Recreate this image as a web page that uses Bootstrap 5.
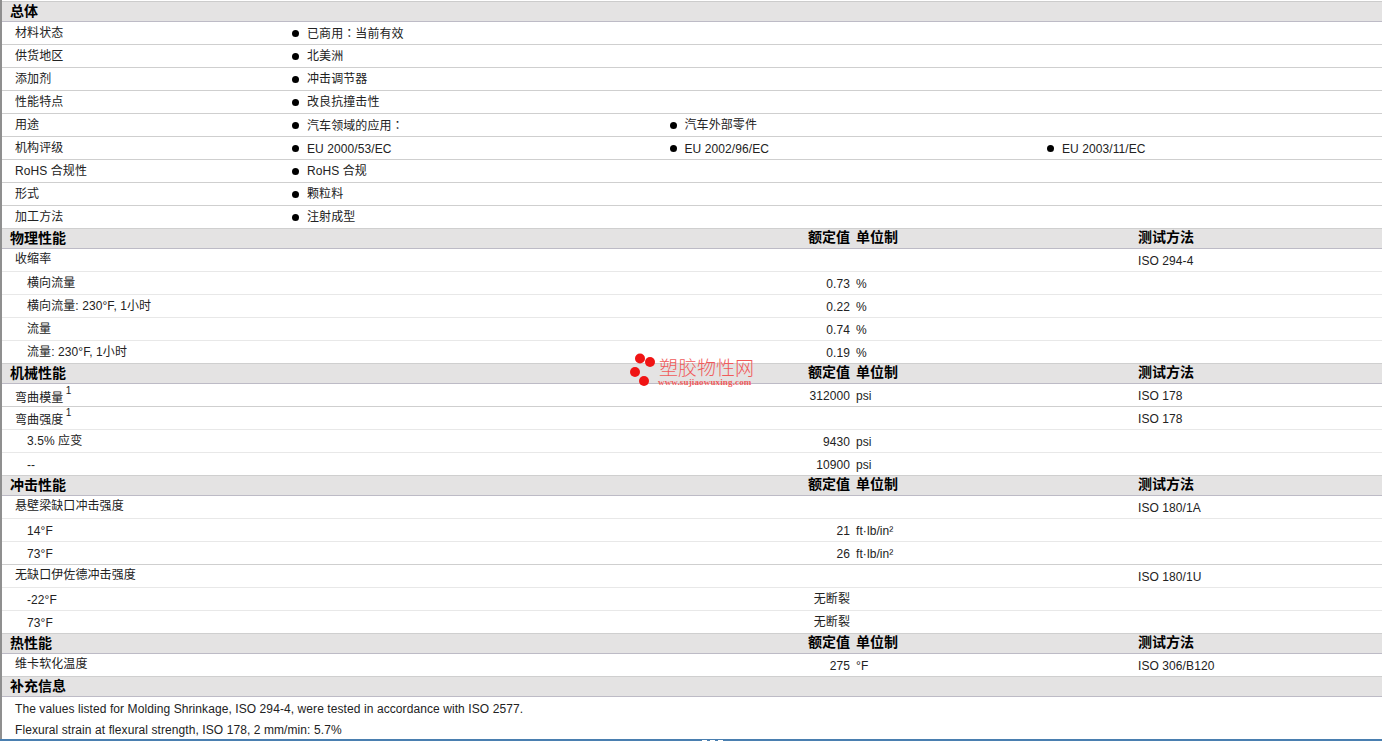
<!DOCTYPE html>
<html lang="zh-CN">
<head>
<meta charset="utf-8">
<title>Datasheet</title>
<link rel="stylesheet" href="https://cdn.jsdelivr.net/npm/bootstrap@5.3.0/dist/css/bootstrap.min.css">
<style>
html,body{height:741px;overflow:hidden;background:#fff}
body{font-family:"Liberation Sans","Noto Sans CJK SC",sans-serif;font-size:12px;line-height:14px;color:#222;letter-spacing:.085px}
.sheet{position:relative;height:741px;border-left:2px solid #8f8f8f;padding-top:1px}
.head-row{display:flex;align-items:center;box-sizing:content-box;height:19px;background:#e4e3e3;border-bottom:1px solid #bdbbc6;font-weight:700;font-size:14px;letter-spacing:0;color:#000}
.head-row>*{position:relative;top:-2px}
.head-row>.c-name{top:-1px}
.head-row .lab{padding-top:2px}
.sheet>.head-row:first-child{border-top:1px solid #ccc}
.item{display:flex;align-items:center;height:23px;border-bottom:1px solid #cfcfcf}
.item.soft{border-bottom-color:#e8e8e8}
.c-name{padding-left:13px;width:276px;flex:none}
.head-row .c-name{padding-left:8px}
.c-unit{width:288px;flex:none;padding-left:6px}
.b-cell{width:377.5px;flex:none;display:flex;align-items:center;gap:8px;padding-left:14px}
.dot{width:7px;height:7px;background:#000;border-radius:50%;flex:none}
.spread{width:848px;flex:none;display:flex;align-items:center}
.spread .lab{width:570px;flex:none;padding-left:13px}
.sub .spread .lab{padding-left:25px}
.spread .num{flex:1;text-align:right}
.item .num,.item .c-unit,.item .tst,.low,.spread .lab.low{padding-top:2px}
.item .num.plain{padding-top:0}
.spread .lab.up{padding-bottom:2px}
.spread .lab.drop{padding-top:5px}
.spread .lab.drop-b{padding-top:3px}
.note{padding:5px 0 0 13px;height:21px}
.cn-colon{font-family:"Noto Sans CJK TC",sans-serif}
sup{font-size:10px;top:-.75em;margin-left:-1px}
.mark-wm{position:absolute;left:627px;top:352px;width:130px;height:36px;color:#f05a5a;pointer-events:none}
.mark-wm svg{position:absolute;left:0;top:0}
.wm-cn{position:absolute;left:30px;top:6px;font-size:19px;line-height:22px;letter-spacing:0;white-space:nowrap;font-weight:300}
.wm-en{position:absolute;left:29px;top:25px;font-family:"Liberation Serif",serif;font-size:9px;line-height:10px;font-weight:700;letter-spacing:.15px;white-space:nowrap}
.foot-bar{position:absolute;left:-2px;right:0;bottom:0;height:2px;background:#4a7fb0}
.foot-cut{position:absolute;left:700px;bottom:0;width:21px;height:1px;background:repeating-linear-gradient(90deg,#fff 0 5px,transparent 5px 8px)}
</style>
</head>
<body>
<div class="sheet">
<div class="head-row"><div class="c-name">总体</div></div>
<div class="item"><div class="c-name">材料状态</div><div class="b-cell"><i class="dot"></i><span>已商用<span class="cn-colon" lang="zh-TW">：</span>当前有效</span></div></div>
<div class="item"><div class="c-name">供货地区</div><div class="b-cell"><i class="dot"></i>北美洲</div></div>
<div class="item"><div class="c-name">添加剂</div><div class="b-cell"><i class="dot"></i>冲击调节器</div></div>
<div class="item"><div class="c-name">性能特点</div><div class="b-cell"><i class="dot"></i>改良抗撞击性</div></div>
<div class="item"><div class="c-name">用途</div><div class="b-cell"><i class="dot"></i><span>汽车领域的应用<span class="cn-colon" lang="zh-TW">：</span></span></div><div class="b-cell"><i class="dot"></i>汽车外部零件</div></div>
<div class="item"><div class="c-name">机构评级</div><div class="b-cell"><i class="dot"></i><span class="low">EU 2000/53/EC</span></div><div class="b-cell"><i class="dot"></i><span class="low">EU 2002/96/EC</span></div><div class="b-cell"><i class="dot"></i><span class="low">EU 2003/11/EC</span></div></div>
<div class="item"><div class="c-name">RoHS 合规性</div><div class="b-cell"><i class="dot"></i>RoHS 合规</div></div>
<div class="item"><div class="c-name">形式</div><div class="b-cell"><i class="dot"></i>颗粒料</div></div>
<div class="item"><div class="c-name">加工方法</div><div class="b-cell"><i class="dot"></i>注射成型</div></div>

<div class="head-row"><div class="spread"><div class="lab ps-2">物理性能</div><div class="num">额定值</div></div><div class="c-unit">单位制</div><div>测试方法</div></div>
<div class="item soft"><div class="spread"><div class="lab up">收缩率</div><div class="num"></div></div><div class="c-unit"></div><div class="tst">ISO 294-4</div></div>
<div class="item soft sub"><div class="spread"><div class="lab">横向流量</div><div class="num">0.73</div></div><div class="c-unit">%</div></div>
<div class="item soft sub"><div class="spread"><div class="lab">横向流量: 230°F, 1小时</div><div class="num">0.22</div></div><div class="c-unit">%</div></div>
<div class="item soft sub"><div class="spread"><div class="lab">流量</div><div class="num">0.74</div></div><div class="c-unit">%</div></div>
<div class="item sub"><div class="spread"><div class="lab">流量: 230°F, 1小时</div><div class="num">0.19</div></div><div class="c-unit">%</div></div>

<div class="head-row"><div class="spread"><div class="lab ps-2">机械性能</div><div class="num">额定值</div></div><div class="c-unit">单位制</div><div>测试方法</div></div>
<div class="item"><div class="spread"><div class="lab drop">弯曲模量 <sup>1</sup></div><div class="num">312000</div></div><div class="c-unit">psi</div><div class="tst">ISO 178</div></div>
<div class="item soft"><div class="spread"><div class="lab drop-b">弯曲强度 <sup>1</sup></div><div class="num"></div></div><div class="c-unit"></div><div class="tst">ISO 178</div></div>
<div class="item soft sub"><div class="spread"><div class="lab">3.5% 应变</div><div class="num">9430</div></div><div class="c-unit">psi</div></div>
<div class="item sub"><div class="spread"><div class="lab low">--</div><div class="num">10900</div></div><div class="c-unit">psi</div></div>

<div class="head-row"><div class="spread"><div class="lab ps-2">冲击性能</div><div class="num">额定值</div></div><div class="c-unit">单位制</div><div>测试方法</div></div>
<div class="item soft"><div class="spread"><div class="lab up">悬壁梁缺口冲击强度</div><div class="num"></div></div><div class="c-unit"></div><div class="tst">ISO 180/1A</div></div>
<div class="item soft sub"><div class="spread"><div class="lab low">14°F</div><div class="num">21</div></div><div class="c-unit">ft·lb/in²</div></div>
<div class="item sub"><div class="spread"><div class="lab low">73°F</div><div class="num">26</div></div><div class="c-unit">ft·lb/in²</div></div>
<div class="item soft"><div class="spread"><div class="lab up">无缺口伊佐德冲击强度</div><div class="num"></div></div><div class="c-unit"></div><div class="tst">ISO 180/1U</div></div>
<div class="item soft sub"><div class="spread"><div class="lab low">-22°F</div><div class="num plain">无断裂</div></div></div>
<div class="item sub"><div class="spread"><div class="lab low">73°F</div><div class="num plain">无断裂</div></div></div>

<div class="head-row"><div class="spread"><div class="lab ps-2">热性能</div><div class="num">额定值</div></div><div class="c-unit">单位制</div><div>测试方法</div></div>
<div class="item"><div class="spread"><div class="lab up">维卡软化温度</div><div class="num">275</div></div><div class="c-unit">°F</div><div class="tst">ISO 306/B120</div></div>

<div class="head-row"><div class="c-name">补充信息</div></div>
<div class="note">The values listed for Molding Shrinkage, ISO 294-4, were tested in accordance with ISO 2577.</div>
<div class="note">Flexural strain at flexural strength, ISO 178, 2 mm/min: 5.7%</div>

<div class="mark-wm">
<svg width="30" height="36" viewBox="0 0 30 36" aria-hidden="true"><g fill="#f01414"><circle cx="11" cy="6.5" r="5"/><circle cx="21" cy="10" r="5"/><circle cx="6" cy="20" r="5"/><circle cx="15" cy="29" r="5"/></g></svg>
<div class="wm-cn">塑胶物性网</div>
<div class="wm-en">www.sujiaowuxing.com</div>
</div>
<div class="foot-bar"></div>
<div class="foot-cut"></div>
</div>
<script src="https://cdn.jsdelivr.net/npm/bootstrap@5.3.0/dist/js/bootstrap.bundle.min.js"></script>
</body>
</html>
